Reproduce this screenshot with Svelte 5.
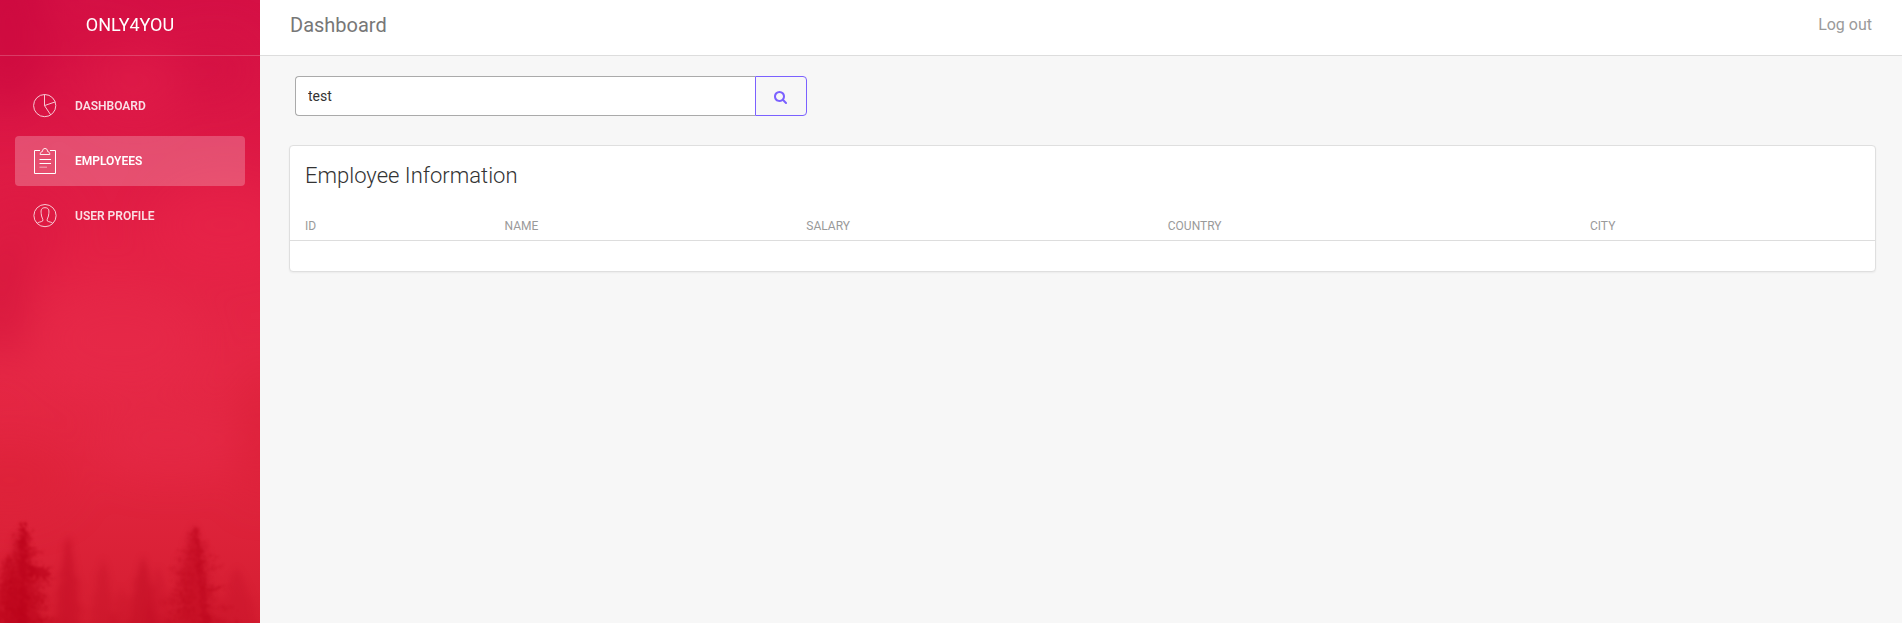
<script>
  const items = [
    { label: 'Dashboard', icon: 'chart', active: false },
    { label: 'Employees', icon: 'notes', active: true },
    { label: 'User Profile', icon: 'user', active: false }
  ];
  const columns = ['ID', 'Name', 'Salary', 'Country', 'City'];
  let query = $state('test');

  // Seeded generator keeps the forest silhouette stable between renders.
  function random(seed) {
    let s = seed;
    return () => {
      s = (s * 16807) % 2147483647;
      return s / 2147483647;
    };
  }

  function tree(x, top, bottom, half, seed) {
    const r = random(seed);
    const left = [];
    const right = [];
    for (let y = top + 4; y < bottom; y += 4) {
      const w = 1.5 + half * Math.pow((y - top) / (bottom - top), 0.8);
      left.push([x - w * (0.65 + r() * 0.6), y + 3], [x - w * (0.3 + r() * 0.3), y + 1]);
      right.push([x + w * (0.65 + r() * 0.6), y + 3], [x + w * (0.3 + r() * 0.3), y + 1]);
    }
    const points = [[x, top], ...right, [x + half, bottom], [x - half, bottom], ...left.reverse()];
    return 'M' + points.map((p) => p[0].toFixed(1) + ' ' + p[1].toFixed(1)).join('L') + 'Z';
  }

  // Thin drooping boughs that fray the outline of a nearby tree.
  function boughs(x, top, bottom, half, seed) {
    const r = random(seed);
    let d = '';
    for (let y = top + 8; y < bottom; y += 2.5) {
      const w = (3 + half * Math.pow((y - top) / (bottom - top), 0.65)) * (0.5 + r() * 0.65);
      const side = r() > 0.5 ? 1 : -1;
      d += `M${x} ${y.toFixed(1)}q${(side * w * 0.5).toFixed(1)} ${(2 + r() * 4).toFixed(1)} ${(side * w).toFixed(1)} ${(r() * 6 - 2).toFixed(1)}`;
    }
    return d;
  }

  const far = [
    { d: tree(68, 536, 640, 21, 41), o: 0.4 },
    { d: tree(103, 558, 640, 22, 77), o: 0.25 },
    { d: tree(143, 556, 640, 23, 93), o: 0.42 },
    { d: tree(158, 566, 640, 18, 112), o: 0.22 },
    { d: tree(237, 567, 640, 34, 135), o: 0.22 },
    { d: tree(122, 586, 640, 18, 151), o: 0.2 },
    { d: tree(194, 524, 640, 42, 173), o: 0.32 },
    { d: tree(20, 528, 640, 46, 197), o: 0.3 }
  ];
  const near = [
    { d: tree(23, 520, 640, 31, 211), o: 0.42 },
    { d: tree(8, 553, 635, 26, 337), o: 0.36 },
    { d: tree(195, 526, 640, 26, 457), o: 0.22 },
    { d: 'M22 524L25 524L28 630L18 630Z', o: 0.5 },
    { d: 'M194 527L198 527L210 625L202 625Z', o: 0.3 },
    { d: 'M29 564L35 567L41 567L43 565L45 570L52 567L50 571L44 578L40 575L29 578Z', o: 0.6 },
    { d: 'M207 588L219 586L231 585L220 589L209 595Z', o: 0.3 }
  ];
  const twigs = [
    { d: boughs(24, 522, 625, 34, 523), o: 0.45 },
    { d: boughs(8, 556, 625, 20, 617), o: 0.4 },
    { d: boughs(195, 524, 625, 38, 719), o: 0.32 }
  ];
</script>

<div class="wrapper">
  <aside class="sidebar">
    <svg class="scenery" viewBox="0 0 260 623" preserveAspectRatio="none" aria-hidden="true">
      <defs>
        <linearGradient id="sky" x1="0" y1="0" x2="0" y2="1">
          <stop offset="0" stop-color="#d51045" />
          <stop offset=".2" stop-color="#dc1745" />
          <stop offset=".4" stop-color="#e42145" />
          <stop offset=".6" stop-color="#e52745" />
          <stop offset=".75" stop-color="#e2253f" />
          <stop offset="1" stop-color="#d51e31" />
        </linearGradient>
        <filter id="soft" x="-50%" y="-50%" width="200%" height="200%" color-interpolation-filters="sRGB"><feGaussianBlur stdDeviation="20" /></filter>
        <filter id="mist" color-interpolation-filters="sRGB"><feGaussianBlur stdDeviation="3" /></filter>
        <filter id="bark" x="-20%" y="-10%" width="140%" height="120%" color-interpolation-filters="sRGB">
          <feTurbulence type="fractalNoise" baseFrequency=".22" numOctaves="3" seed="5" result="noise" />
          <feDisplacementMap in="SourceGraphic" in2="noise" scale="11" xChannelSelector="R" yChannelSelector="G" />
          <feGaussianBlur stdDeviation=".8" />
        </filter>
      </defs>
      <rect width="260" height="623" fill="url(#sky)" />
      <g filter="url(#soft)">
        <ellipse cx="8" cy="30" rx="42" ry="80" fill="#c9053c" opacity=".55" />
        <ellipse cx="95" cy="45" rx="45" ry="28" fill="#ce0a3d" opacity=".25" />
        <ellipse cx="135" cy="85" rx="48" ry="38" fill="#e4204c" opacity=".4" />
        <ellipse cx="215" cy="70" rx="40" ry="32" fill="#d31041" opacity=".4" />
        <ellipse cx="20" cy="235" rx="50" ry="45" fill="#d6153f" opacity=".4" />
        <ellipse cx="0" cy="300" rx="26" ry="55" fill="#d0133b" opacity=".6" />
        <ellipse cx="225" cy="225" rx="70" ry="45" fill="#ea254c" opacity=".4" />
        <ellipse cx="120" cy="340" rx="85" ry="55" fill="#e8294a" opacity=".5" />
        <ellipse cx="170" cy="440" rx="75" ry="35" fill="#e62a47" opacity=".5" />
        <ellipse cx="262" cy="430" rx="20" ry="70" fill="#d91e36" opacity=".6" />
        <ellipse cx="10" cy="480" rx="60" ry="35" fill="#dc2035" opacity=".5" />
      </g>
      <g filter="url(#mist)">
        {#each far as t}<path d={t.d} fill="#bb061f" opacity={t.o} />{/each}
      </g>
      <g filter="url(#bark)">
        {#each near as t}<path d={t.d} fill="#b90019" opacity={t.o} />{/each}
        {#each twigs as t}<path class="twig" d={t.d} opacity={t.o} />{/each}
      </g>
    </svg>

    <div class="brand">ONLY4YOU</div>
    <nav>
      {#each items as item}
        <div class="item" class:active={item.active}>
          <svg class="icon" viewBox="0 0 28 28" aria-hidden="true">
            {#if item.icon === 'chart'}
              <circle cx="13.7" cy="13.6" r="11.1" />
              <path d="M13.500 2.500V13.600L24.200 9.900M13.500 13.600L19.700 22.900" />
            {:else if item.icon === 'notes'}
              <path class="crisp" d="M9 3.5H3.5V26.5H24.5V3.5H19" />
              <path d="M9.200 7.500H18.800C18.800 5.600 17.800 4.700 16.500 4.400C16.500 2.400 15.500 1.500 14 1.500S11.500 2.400 11.500 4.400C10.200 4.700 9.200 5.600 9.200 7.500Z" />
              <path class="crisp" d="M8.500 12.500H20M8.500 16.500H20" />
              <path class="pale" d="M8.500 20.200H16" />
            {:else}
              <circle cx="14" cy="13.600" r="11.1" />
              <path d="M6.200 21.300C7 20 10.200 20.100 11.700 19C12.700 17.400 10.100 15.200 10.200 11.500C9.700 7.700 10.500 5.700 14 5.700S18.300 7.700 17.800 11.500C17.900 15.200 15.300 17.400 16.300 19C17.800 20.100 21 20 21.800 21.300" />
            {/if}
          </svg>
          <span>{item.label}</span>
        </div>
      {/each}
    </nav>
  </aside>

  <main>
    <header>
      <span class="page">Dashboard</span>
      <span class="logout">Log out</span>
    </header>

    <div class="content">
      <form class="search" onsubmit={(e) => e.preventDefault()}>
        <input type="text" aria-label="Search" bind:value={query} />
        <button type="submit" aria-label="Search">
          <svg viewBox="0 0 1664 1664" width="13" height="13" aria-hidden="true">
            <path d="M1152 704q0-185-131.500-316.500T704 256 387.500 387.500 256 704t131.500 316.500T704 1152t316.500-131.500T1152 704zm512 832q0 52-38 90t-90 38q-54 0-90-38l-343-342q-179 124-399 124-143 0-273.500-55.500t-225-150-150-225T0 704t55.500-273.500 150-225 225-150T704 0t273.500 55.500 225 150 150 225T1408 704q0 220-124 399l343 343q37 37 37 90z" />
          </svg>
        </button>
      </form>

      <section class="card">
        <h4>Employee Information</h4>
        <div class="table-head">
          {#each columns as column}<span>{column}</span>{/each}
        </div>
      </section>
    </div>
  </main>
</div>

<style>
  :global(body) { margin: 0; }
  .wrapper {
    display: flex;
    height: 623px;
    overflow: hidden;
    background: #f7f7f7;
    font-family: Roboto, sans-serif;
  }
  .wrapper, .wrapper * { box-sizing: border-box; }
  .sidebar { position: relative; flex: 0 0 260px; isolation: isolate; color: #fff; }
  .scenery { position: absolute; inset: 0; z-index: -1; width: 100%; height: 100%; }
  .twig { fill: none; stroke: #b90019; stroke-width: 1.3; }
  .brand {
    height: 56px;
    padding-top: 10px;
    border-bottom: 1px solid rgba(255, 255, 255, .2);
    font-size: 18px;
    line-height: 30px;
    text-align: center;
  }
  nav { display: flex; flex-direction: column; gap: 5px; padding: 25px 15px 0; }
  .item {
    display: flex;
    align-items: center;
    gap: 16px;
    height: 50px;
    padding-left: 16px;
    border-radius: 4px;
    font-size: 12px;
    font-weight: 600;
    text-transform: uppercase;
  }
  .item span, .item .icon { opacity: .86; }
  .item.active { background: rgba(255, 255, 255, .23); }
  .item.active span, .item.active .icon { opacity: 1; }
  .icon { width: 28px; height: 28px; fill: none; stroke: #fff; stroke-width: .9; }
  .crisp { stroke-width: 1; }
  .pale { opacity: .6; }
  main { flex: 1; min-width: 0; }
  header {
    display: flex;
    justify-content: space-between;
    height: 56px;
    padding: 10px 30px 0;
    border-bottom: 1px solid #ddd;
    background: #fff;
    line-height: 30px;
  }
  .page { font-size: 20px; color: #777; }
  .logout { font-size: 16px; color: #9a9a9a; }
  .content { padding: 20px 26px 0 29px; }
  .search { display: flex; width: 512px; height: 40px; margin: 0 0 29px 6px; }
  input {
    flex: 1;
    min-width: 0;
    margin: 0;
    padding: 0 12px;
    border: 1px solid #aaa;
    border-right: 0;
    border-radius: 4px 0 0 4px;
    outline: 0;
    background: #fff;
    color: #333;
    font: 14px Roboto, sans-serif;
  }
  button {
    display: flex;
    align-items: center;
    justify-content: center;
    width: 52px;
    padding: 2px 1px 0 0;
    border: 1px solid #7b61ff;
    border-radius: 0 4px 4px 0;
    background: transparent;
    fill: #7b61ff;
  }
  .card {
    height: 127px;
    border: 1px solid #dfdfdf;
    border-radius: 4px;
    background: #fff;
    box-shadow: 0 1px 2px rgba(0, 0, 0, .05);
  }
  h4 { margin: 0; padding: 15px 15px 0; font-size: 22px; font-weight: 300; line-height: 30px; color: #333; }
  .table-head {
    display: grid;
    grid-template-columns: 199.6px 301.7px 361.500px 422.200px 1fr;
    height: 50px;
    padding: 22px 15px 0;
    border-bottom: 1px solid #ddd;
    font-size: 12px;
    line-height: 26px;
    text-transform: uppercase;
    color: #9a9a9a;
  }
</style>
